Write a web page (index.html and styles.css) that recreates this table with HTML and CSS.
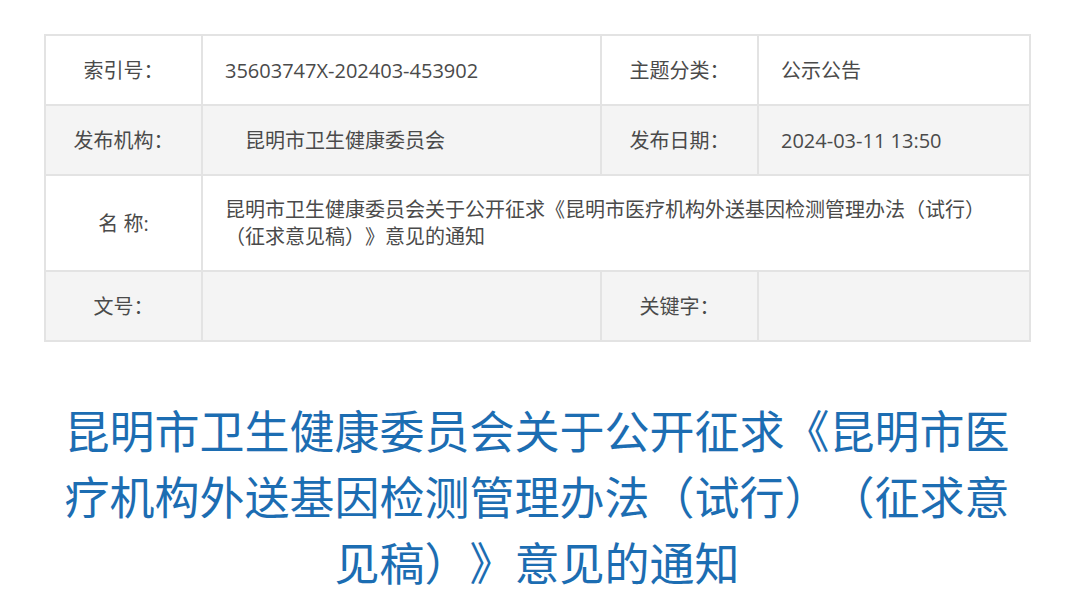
FILE: index.html
```html
<!DOCTYPE html>
<html lang="zh-CN">
<head>
    <meta charset="UTF-8">
    <meta name="viewport" content="width=device-width, initial-scale=1.0">
    <title>昆明市卫生健康委员会关于公开征求意见的通知</title>
    <link rel="stylesheet" href="styles.css">
</head>
<body>

    <div class="page">

        <!-- Info Table -->
        <table class="info-table">
            <colgroup>
                <col class="col-label">
                <col class="col-value">
                <col class="col-label">
                <col class="col-value-short">
            </colgroup>
            <tr>
                <td class="label">索引号：</td>
                <td class="value">35603747X-202403-453902</td>
                <td class="label">主题分类：</td>
                <td class="value">公示公告</td>
            </tr>
            <tr class="row-gray">
                <td class="label">发布机构：</td>
                <td class="value">　昆明市卫生健康委员会</td>
                <td class="label">发布日期：</td>
                <td class="value">2024-03-11 13:50</td>
            </tr>
            <tr class="row-tall">
                <td class="label">名 称:</td>
                <td class="value" colspan="3">昆明市卫生健康委员会关于公开征求《昆明市医疗机构外送基因检测管理办法（试行）（征求意见稿）》意见的通知</td>
            </tr>
            <tr class="row-gray">
                <td class="label">文号：</td>
                <td class="value"></td>
                <td class="label">关键字：</td>
                <td class="value"></td>
            </tr>
        </table>

        <!-- Article Title -->
        <h1 class="article-title">昆明市卫生健康委员会关于公开征求《昆明市医疗机构外送基因检测管理办法（试行）（征求意见稿）》意见的通知</h1>

    </div>

</body>
</html>
```

FILE: styles.css
```css
/* General Styling */
body {
    font-family: 'Open Sans', 'Noto Sans CJK SC', sans-serif;
    background: #ffffff;
    margin: 0;
    padding: 0;
    text-spacing-trim: space-all;
}

.page {
    width: 986px;
    padding-top: 34px;
    margin-left: 44px;
}

/* Info Table */
.info-table {
    width: 985px;
    border-collapse: collapse;
    table-layout: fixed;
    font-size: 20px;
    line-height: 27px;
    color: #4a4a4a;
}

.col-label {
    width: 157px;
}

.col-value {
    width: 399px;
}

.col-value-short {
    width: 272px;
}

.info-table tr {
    height: 70px;
}

.info-table tr.row-tall {
    height: 96px;
}

.info-table td {
    border: 2px solid #e3e3e3;
    padding: 0;
    vertical-align: middle;
}

.row-gray td {
    background: #f4f4f4;
}

.label {
    text-align: center;
}

.value {
    text-align: left;
    padding-left: 22px !important;
    padding-right: 22px !important;
}

/* Article Title */
.article-title {
    margin: 57px 0 0 0;
    font-size: 45px;
    font-weight: normal;
    line-height: 66px;
    text-align: center;
    color: #1c6db2;
}
```
